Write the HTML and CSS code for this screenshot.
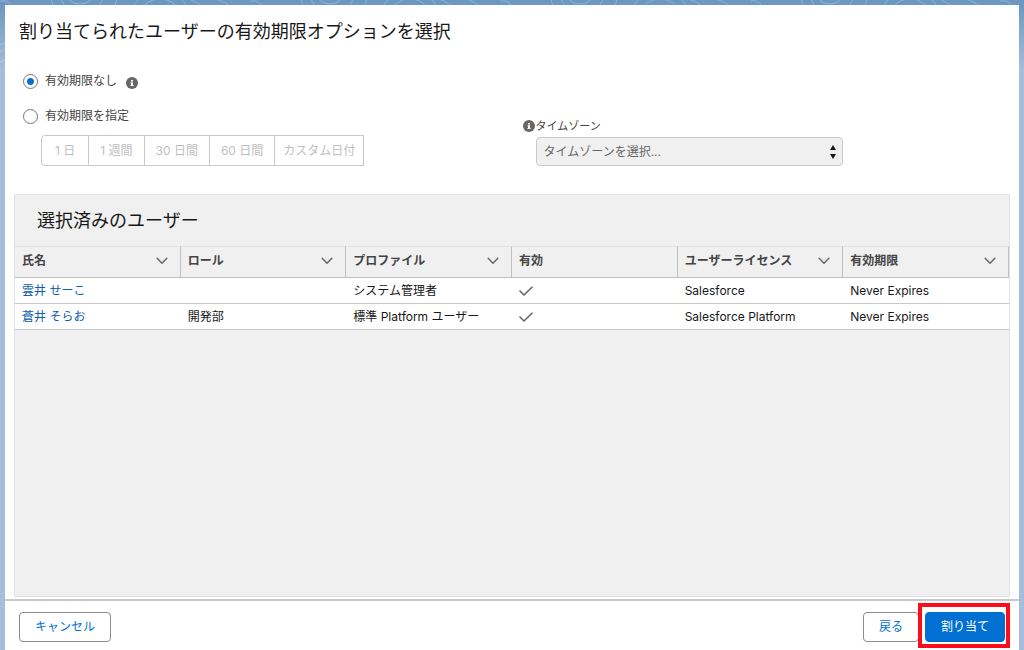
FILE: index.html
```html
<!DOCTYPE html>
<html lang="ja">
<head>
  <meta charset="UTF-8">
  <meta name="viewport" content="width=device-width, initial-scale=1">
  <title>有効期限オプション</title>
  <link rel="stylesheet" href="styles.css">
</head>
<body>
  <!-- Fondo con curvas de nivel -->
  <svg class="backdrop" aria-hidden="true">
    <defs>
      <pattern id="contours" width="250" height="110" patternUnits="userSpaceOnUse">
        <g fill="none" stroke="#fff" stroke-opacity=".25">
          <ellipse cx="80" cy="-8" rx="14" ry="12"/>
          <ellipse cx="82" cy="-8" rx="22" ry="22"/>
          <ellipse cx="84" cy="-8" rx="34" ry="32"/>
          <ellipse cx="160" cy="10" rx="17" ry="11"/>
          <ellipse cx="160" cy="10" rx="27" ry="17"/>
          <path d="M187 -2q10 4 18 10M212 -2q14 3 22 12M-2 2q9 -4 14 4"/>
          <path d="M0 45l5 -2M0 52l5 -3M0 62l5 -2"/>
        </g>
      </pattern>
    </defs>
    <rect width="100%" height="110" fill="url(#contours)"/>
  </svg>

  <svg class="icon-defs" aria-hidden="true">
    <symbol id="info" viewBox="0 0 12 12">
      <circle cx="6" cy="6" r="6" fill="#666"/>
      <path d="M5 3h2v1.500H5zM4.500 5.300H7v2.700h.6v1H4.400V8H5V6.200h-.5z" fill="#fff"/>
    </symbol>
    <symbol id="chevron" viewBox="0 0 12 8">
      <path d="M1.200 1.200L6 6.200l4.800-5" fill="none" stroke="#666" stroke-width="1.500" stroke-linecap="round" stroke-linejoin="round"/>
    </symbol>
    <symbol id="check" viewBox="0 0 14 10">
      <path d="M1 5l4 4L13 1.200" fill="none" stroke="#666" stroke-width="1.600" stroke-linecap="round" stroke-linejoin="round"/>
    </symbol>
  </svg>

  <div class="modal">
    <main class="content">
      <h1>割り当てられたユーザーの有効期限オプションを選択</h1>

      <form class="options">
        <div class="expiration">
          <div class="radio-row">
            <input type="radio" id="noExpire" name="expiration" checked>
            <label for="noExpire">有効期限なし</label>
            <svg class="info"><use href="#info"/></svg>
          </div>
          <div class="radio-row">
            <input type="radio" id="setExpire" name="expiration">
            <label for="setExpire">有効期限を指定</label>
          </div>
          <div class="button-group">
            <button type="button" disabled>1 日</button>
            <button type="button" disabled>1 週間</button>
            <button type="button" disabled>30 日間</button>
            <button type="button" disabled>60 日間</button>
            <button type="button" disabled>カスタム日付</button>
          </div>
        </div>

        <div class="timezone">
          <div class="timezone-label">
            <svg class="info"><use href="#info"/></svg>
            <label for="timezone">タイムゾーン</label>
          </div>
          <div class="select-wrap">
            <select id="timezone" disabled>
              <option>タイムゾーンを選択...</option>
            </select>
            <svg class="arrows" viewBox="0 0 6 16"><path d="M3 1l3 5H0zM3 15l3-5H0z" fill="#181818"/></svg>
          </div>
        </div>
      </form>

      <section class="users">
        <h2>選択済みのユーザー</h2>
        <table>
          <thead>
            <tr>
              <th><div class="head">氏名 <svg class="chevron"><use href="#chevron"/></svg></div></th>
              <th><div class="head">ロール <svg class="chevron"><use href="#chevron"/></svg></div></th>
              <th><div class="head">プロファイル <svg class="chevron"><use href="#chevron"/></svg></div></th>
              <th><div class="head">有効</div></th>
              <th><div class="head">ユーザーライセンス <svg class="chevron"><use href="#chevron"/></svg></div></th>
              <th><div class="head">有効期限 <svg class="chevron"><use href="#chevron"/></svg></div></th>
            </tr>
          </thead>
          <tbody>
            <tr>
              <td><a href="#">雲井 せーこ</a></td>
              <td></td>
              <td>システム管理者</td>
              <td><svg class="check"><use href="#check"/></svg></td>
              <td>Salesforce</td>
              <td>Never Expires</td>
            </tr>
            <tr>
              <td><a href="#">蒼井 そらお</a></td>
              <td>開発部</td>
              <td>標準 Platform ユーザー</td>
              <td><svg class="check"><use href="#check"/></svg></td>
              <td>Salesforce Platform</td>
              <td>Never Expires</td>
            </tr>
          </tbody>
        </table>
      </section>
    </main>

    <footer>
      <button type="button" class="btn">キャンセル</button>
      <div class="actions">
        <button type="button" class="btn">戻る</button>
        <div class="highlight">
          <button type="button" class="btn btn-brand">割り当て</button>
        </div>
      </div>
    </footer>
  </div>
</body>
</html>
```
FILE: styles.css
```css
* {
  box-sizing: border-box;
}

body {
  margin: 0;
  min-height: 100vh;
  display: flex;
  padding: 5px 5px 0;
  background: linear-gradient(#6a96c0, #a6bddb 70px);
  font-family: Inter, "Noto Sans CJK JP", sans-serif;
  font-size: 12px;
  line-height: 18px;
  color: #181818;
}

button, select {
  font: inherit;
}

.backdrop {
  position: absolute;
  top: 0;
  left: 0;
  width: 100%;
  height: 110px;
}

.icon-defs {
  position: absolute;
  width: 0;
  height: 0;
}

.modal {
  position: relative;
  flex: 1;
  display: flex;
  flex-direction: column;
  background: #fff;
}

.content {
  flex: 1;
  display: flex;
  flex-direction: column;
  padding: 14px 9px 0;
}

h1, h2 {
  margin: 0;
  font-size: 18px;
  line-height: 26px;
  font-weight: 400;
}

h1 {
  padding-left: 5px;
}

/* Opciones de vencimiento */
.options {
  display: grid;
  grid-template-columns: 1fr 1fr;
  padding: 26px 0 28px 9px;
}

.radio-row {
  display: flex;
  align-items: center;
  gap: 7px;
  height: 20px;
  margin-bottom: 15px;
  color: #444;
}

.radio-row input {
  appearance: none;
  width: 15px;
  height: 15px;
  margin: 0;
  border: 1px solid #747474;
  border-radius: 50%;
  background: #fff;
}

.radio-row input:checked {
  background: radial-gradient(circle, #0070d2 3px, #fff 4px);
}

.info {
  width: 12px;
  height: 12px;
}

.radio-row .info {
  margin: 4px 0 0 2px;
}

.button-group {
  display: flex;
  margin: -6px 0 0 18px;
}

.button-group button {
  height: 31px;
  padding: 0 11px;
  border: 1px solid #c9c9c9;
  border-left-width: 0;
  background: #fff;
  color: #c0c0c0;
}

.button-group button:first-child {
  padding: 0 13px;
  border-left-width: 1px;
  border-radius: 4px 0 0 4px;
}

.button-group button:last-child {
  padding: 0 8px;
}

.timezone {
  padding-top: 46px;
  padding-left: 6px;
}

.timezone-label {
  display: flex;
  align-items: center;
  gap: 1px;
  color: #444;
  font-size: 11px;
}

.select-wrap {
  position: relative;
  width: 63%;
  margin: 2px 0 0 13px;
}

select {
  appearance: none;
  width: 100%;
  height: 29px;
  padding: 0 7px;
  border: 1px solid #c9c9c9;
  border-radius: 4px;
  background: #f0f0f0;
  color: #666;
  opacity: 1;
}

.arrows {
  position: absolute;
  top: 7px;
  right: 7px;
  width: 6px;
  height: 16px;
}

/* Tabla de usuarios */
.users {
  flex: 1;
  margin-bottom: 2px;
  border: 1px solid #e0e0e0;
  border-radius: 2px;
  background: #f0f0f0;
}

.users h2 {
  padding: 13px 22px 12px;
}

table {
  width: 100%;
  table-layout: fixed;
  border-collapse: separate;
  border-spacing: 0;
}

th {
  height: 32px;
  padding: 0 12px 2px 7px;
  border-top: 1px solid #e0e0e0;
  border-right: 1px solid #c0c0c0;
  border-bottom: 1px solid #c0c0c0;
  color: #444;
  font-weight: 700;
  text-align: left;
}

.head {
  display: flex;
  align-items: center;
  justify-content: space-between;
}

.chevron {
  width: 12px;
  height: 8px;
}

td {
  height: 26px;
  padding: 0 7px;
  border-bottom: 1px solid #c9c9c9;
  background: #fff;
}

td a {
  color: #0b5cab;
  text-decoration: none;
}

.check {
  display: block;
  width: 14px;
  height: 10px;
}

/* Pie con botones */
footer {
  display: flex;
  justify-content: space-between;
  padding: 11px 14px 8px;
  border-top: 2px solid #c9c9c9;
}

.actions {
  display: flex;
  gap: 6px;
}

.btn {
  height: 30px;
  padding: 0 15px;
  border: 1px solid #8c8c8c;
  border-radius: 4px;
  background: #fff;
  color: #0070d2;
  cursor: pointer;
}

.btn-brand {
  border-color: #0070d2;
  background: #0070d2;
  color: #fff;
}

.highlight {
  position: relative;
}

.highlight::after {
  content: "";
  position: absolute;
  inset: -9px -5px -6px -7px;
  border: 4px solid #fc0d1b;
  pointer-events: none;
}
```
